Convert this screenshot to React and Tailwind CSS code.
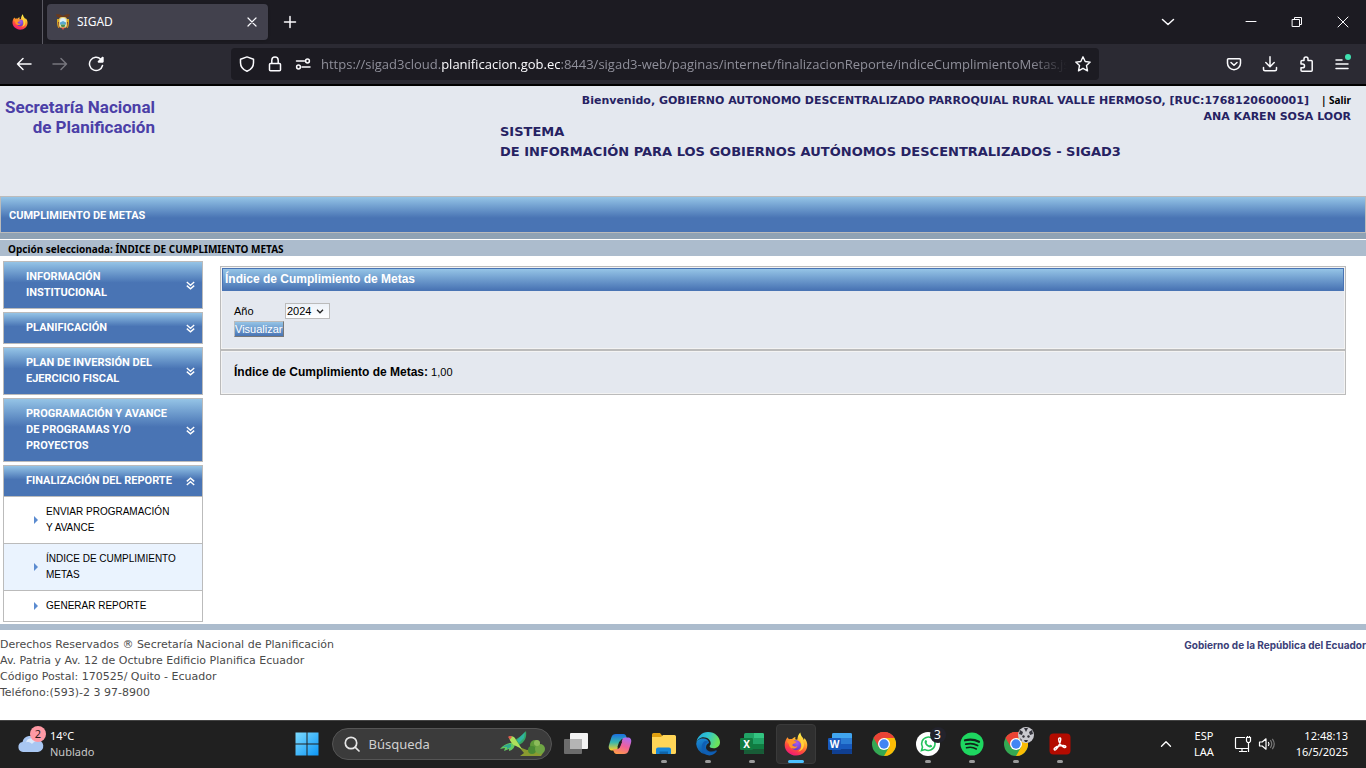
import React, { useState } from 'react';

const FirefoxIcon = ({ className }) => (
  <svg viewBox="0 0 24 24" className={className} aria-hidden="true">
    <defs>
      <linearGradient id="fxBody" x1="0.75" y1="0" x2="0.3" y2="1">
        <stop offset="0.1" stopColor="#fff04a" />
        <stop offset="0.4" stopColor="#ffa42a" />
        <stop offset="0.7" stopColor="#ff4a3d" />
        <stop offset="1" stopColor="#f0147d" />
      </linearGradient>
      <radialGradient id="fxGlobe" cx="0.6" cy="0.3" r="0.8">
        <stop offset="0" stopColor="#a35cf0" />
        <stop offset="1" stopColor="#5a35c0" />
      </radialGradient>
    </defs>
    <path
      fill="url(#fxBody)"
      d="M3.6 5.2c.5 1 .9 1.600 1.500 2.100.9-.4 2-.5 3-.2C9.200 5.900 10 5.400 11.500 5c-.4 1-.4 1.800 0 2.600.7.200 1.400.2 1.900 0 .2-3.400 1.300-5.600 3-7.100.1 2.400 1 3.600 2.200 5 .6.8 1 1.500 1.200 2.400.5-.5.6-1.200.6-2 2 2.200 2.900 4.600 2.900 7.100 0 5.900-4.800 10.500-11.100 10.500S.7 18.800.7 12.900c0-3 1.200-5.700 2.900-7.700z"
    />
    <circle cx="12" cy="13.200" r="5" fill="url(#fxGlobe)" />
    <path
      fill="#ff9328"
      d="M3 9.500c2-1.800 4.200-2.200 6-1.300 1.300.6 2.200 1.400 3.600 1.600-.3 1.200-2 1.600-3 1.900-.9.400-1.300 1-1.200 1.900 1.500 1.200 3.400 1.500 5.100.3-.8 1.800-2.500 2.900-4.400 2.700-2.700-.2-4.200-2.200-4.300-4.600C4.200 11.200 3.400 10.400 3 9.500z"
    />
    <path fill="#ffd33a" d="M16.500 4c.5 3 3.500 4.400 3.500 8.600 0 3.800-2.700 6.400-5.800 7 2.700-1.700 3.600-4.300 3.100-7.300-.4-2.600-1.800-4.600-.8-8.300z" />
  </svg>
);

const ShieldCrest = () => (
  <svg viewBox="0 0 16 16" className="h-4 w-4" aria-hidden="true">
    <path fill="#6b3a1c" d="M1 .5C3.500 0 6 .5 8 2c2-1.500 4.500-2 7-1.500-.3 2-2.300 3.500-4.500 3.500h-5C3.300 4 1.300 2.500 1 .5z" />
    <path fill="#d8a821" d="M2 5h3v9H3.500C2.500 13 2 10 2 8zM11 5h3v3c0 2-.5 5-1.500 6H11z" />
    <path fill="#8a3a2c" d="M3 8h2v6H4zM11 8h2l-1 6h-1z" />
    <rect x="4" y="3" width="8" height="11" rx="3" fill="#e7d27a" />
    <rect x="5" y="4" width="6" height="9" rx="2.800" fill="#dff0f8" />
    <path fill="#5aa7d0" d="M5 8.500l3-1.500 3 1.500v2H5z" />
    <path fill="#4e8f50" d="M5.500 10.500h5L9.500 13h-3z" />
    <path fill="#d95043" d="M6 13.500h4L8 16z" />
  </svg>
);

const Stroke = ({ className, children, width = 1.5 }) => (
  <svg
    viewBox="0 0 16 16"
    className={className}
    fill="none"
    stroke="currentColor"
    strokeWidth={width}
    strokeLinecap="round"
    strokeLinejoin="round"
    aria-hidden="true"
  >
    {children}
  </svg>
);

const TabStrip = () => (
  <div className="flex h-11 items-center bg-[#1c1b22] text-[#fbfbfe]">
    <div className="flex h-full w-[43px] items-center justify-center border-r border-[#5b5a63] pr-[2px]">
      <FirefoxIcon className="h-4 w-4" />
    </div>
    <div className="ml-1 flex h-9 w-[221px] items-center rounded bg-[#42414d] pr-2 pl-2 shadow-sm">
      <ShieldCrest />
      <span className="ml-[6px] flex-1 text-xs">SIGAD</span>
      <button type="button" aria-label="Cerrar" className="flex h-4 w-4 items-center justify-center">
        <Stroke className="h-4 w-4" width={1.200}><path d="M4 4l8 8M12 4l-8 8" /></Stroke>
      </button>
    </div>
    <button type="button" aria-label="Nueva" className="ml-[14px]">
      <Stroke className="h-4 w-4" width={1.500}><path d="M8 2.500v11M2.500 8h11" /></Stroke>
    </button>
    <div className="ml-auto flex items-center">
      <button type="button" aria-label="Lista" className="mr-[52px]">
        <Stroke className="h-4 w-4"><path d="M2.500 5.500L8 10.500l5.500-5" /></Stroke>
      </button>
      <button type="button" aria-label="Minimizar" className="flex w-[46px] justify-center">
        <Stroke className="h-4 w-4" width={1}><path d="M3 7.500h10" /></Stroke>
      </button>
      <button type="button" aria-label="Restaurar" className="flex w-[46px] justify-center">
        <Stroke className="h-4 w-4" width={1}><path d="M3.500 5.500h7v7h-7zM5.500 5.500v-2h7v7h-2" /></Stroke>
      </button>
      <button type="button" aria-label="Cerrar ventana" className="flex w-[46px] justify-center">
        <Stroke className="h-4 w-4" width={1}><path d="M3 3l10 10M13 3L3 13" /></Stroke>
      </button>
    </div>
  </div>
);

const NavBar = () => (
  <div className="flex h-[42px] items-center border-b-2 border-black bg-[#2b2a33] text-[#fbfbfe]">
    <div className="flex w-[231px] shrink-0 items-center gap-5 pl-4">
      <button type="button" aria-label="Atrás">
        <Stroke className="h-4 w-4"><path d="M1.500 8h13.500M7 2.500L1.500 8 7 13.500" /></Stroke>
      </button>
      <button type="button" aria-label="Adelante" className="text-[#77767e]">
        <Stroke className="h-4 w-4"><path d="M1 8h13.500M9 2.500L14.500 8 9 13.500" /></Stroke>
      </button>
      <button type="button" aria-label="Recargar">
        <Stroke className="h-4 w-4">
          <path d="M14.500 9.500A6.600 6.600 0 1 1 12.800 3.300M14.700 1.500v4.200h-4.200z" />
          <path fill="currentColor" d="M14.700 1.500v4.200h-4.200z" />
        </Stroke>
      </button>
    </div>
    <div className="flex h-8 w-[868px] items-center rounded bg-[#1c1b22] pr-2 pl-2">
      <Stroke className="h-4 w-4 shrink-0">
        <path d="M8 .9l6.500 2.300v3.600c0 4-2.600 7-6.500 8.500C4.100 13.800 1.500 10.800 1.500 6.800V3.200z" />
      </Stroke>
      <Stroke className="ml-3 h-4 w-4 shrink-0">
        <path d="M3.500 7.500h9a1 1 0 0 1 1 1v5.300a1 1 0 0 1-1 1h-9a1 1 0 0 1-1-1V8.500a1 1 0 0 1 1-1zM4.800 7.300V4.200a3.200 3.200 0 0 1 6.400 0v3.100" />
      </Stroke>
      <Stroke className="ml-3 h-4 w-4 shrink-0">
        <path d="M1.500 5h8M7 11h8" />
        <circle cx="12.500" cy="5" r="1.900" />
        <circle cx="3.500" cy="11" r="1.900" />
      </Stroke>
      <div className="ml-[10px] min-w-0 flex-1 overflow-hidden font-['Open_Sans',sans-serif] text-[13px] leading-5 whitespace-nowrap text-[#8f8f9a] [mask-image:linear-gradient(to_left,transparent,black_36px)]">
        https://sigad3cloud.<span className="text-[#fbfbfe]">planificacion.gob.ec</span>
        :8443/sigad3-web/paginas/internet/finalizacionReporte/indiceCumplimientoMetas.js
      </div>
      <button type="button" aria-label="Marcador" className="ml-2 shrink-0">
        <Stroke className="h-4 w-4" width={1.400}>
          <path d="M8 .8l2.200 4.700 5 .6-3.700 3.500 1 5.200L8 12.300l-4.500 2.500 1-5.200L.8 6.100l5-.6z" />
        </Stroke>
      </button>
    </div>
    <div className="ml-auto flex items-center gap-5 pr-4">
      <button type="button" aria-label="Pocket">
        <Stroke className="h-4 w-4">
          <path d="M2.500 2.800h11a1 1 0 0 1 1 1v3.400a6.500 6.500 0 0 1-13 0V3.800a1 1 0 0 1 1-1zM5 6.500l3 2.800 3-2.800" />
        </Stroke>
      </button>
      <button type="button" aria-label="Descargas">
        <Stroke className="h-4 w-4">
          <path d="M8 .8v9.700M3.800 6.500L8 10.700l4.200-4.200M1.500 11.500v1.800a1.500 1.500 0 0 0 1.500 1.500h10a1.500 1.500 0 0 0 1.500-1.500v-1.800" />
        </Stroke>
      </button>
      <button type="button" aria-label="Extensiones">
        <Stroke className="h-4 w-4">
          <path d="M6 4.500V3a2 2 0 0 1 4 0v1.500h3.200a1 1 0 0 1 1 1v8.700a1 1 0 0 1-1 1H4a1 1 0 0 1-1-1v-2.400h1.600a1.900 1.900 0 0 0 0-3.800H3V5.500a1 1 0 0 1 1-1z" />
        </Stroke>
      </button>
      <button type="button" aria-label="Menú" className="relative">
        <Stroke className="h-4 w-4"><path d="M2 4h6M2 8h12M2 12.500h12" /></Stroke>
        <span className="absolute -top-[2px] -right-[1px] h-[6px] w-[6px] rounded-full bg-[#3fe1b0]" />
      </button>
    </div>
  </div>
);

const menu = [
  'INFORMACIÓN INSTITUCIONAL',
  'PLANIFICACIÓN',
  'PLAN DE INVERSIÓN DEL EJERCICIO FISCAL',
  'PROGRAMACIÓN Y AVANCE DE PROGRAMAS Y/O PROYECTOS',
];

const options = ['ENVIAR PROGRAMACIÓN Y AVANCE', 'ÍNDICE DE CUMPLIMIENTO METAS', 'GENERAR REPORTE'];

const DoubleChevron = ({ up }) => (
  <svg viewBox="0 0 9 9" className={up ? 'h-[9px] w-[9px] rotate-180' : 'h-[9px] w-[9px]'} fill="none" stroke="#fff" strokeWidth="1.400" aria-hidden="true">
    <path d="M.8 1l3.700 3.200L8.200 1M.8 4.600l3.700 3.200 3.700-3.200" />
  </svg>
);

const MenuHeader = ({ label, open }) => (
  <button
    type="button"
    className="flex w-full items-center justify-between border border-[#bbb] bg-linear-to-b from-[#95c4e6] via-[#4974b4] via-45% to-[#4974b4] py-[7px] pr-[7px] pl-[22px] text-left font-['Roboto',sans-serif] text-[11px] leading-4 font-bold text-white"
  >
    <span className="w-[152px]">{label}</span>
    <DoubleChevron up={open} />
  </button>
);

const Sidebar = () => (
  <nav className="flex w-[200px] shrink-0 flex-col gap-[3px]">
    {menu.map((label) => (
      <MenuHeader key={label} label={label} />
    ))}
    <div>
      <MenuHeader label="FINALIZACIÓN DEL REPORTE" open />
      <ul className="border-x border-[#bbb] text-[10px] leading-4">
        {options.map((label, i) => (
          <li key={label} className={i === 1 ? 'border-b border-[#bbb] bg-[#eaf3fe]' : 'border-b border-[#bbb]'}>
            <a href="#" className="flex items-center py-[7px] pl-[30px] text-black">
              <svg viewBox="0 0 4 8" className="h-2 w-1 shrink-0" fill="#5b8bd0" aria-hidden="true">
                <path d="M0 0l4 4-4 4z" />
              </svg>
              <span className="ml-2 w-[130px]">{label}</span>
            </a>
          </li>
        ))}
      </ul>
    </div>
  </nav>
);

const ReportPanel = () => {
  const [year, setYear] = useState('2024');

  return (
    <section className="mt-[5px] mr-5 ml-[17px] flex-1 self-start border border-[#bbb] bg-[#e4e8ef] text-[11px] text-black">
      <div className="border border-[#f3f3f3] pb-[11px]">
        <h2 className="h-[23px] border border-[#4974b4] bg-linear-to-b from-[#95c4e6] to-[#4974b4] pl-[2px] text-xs leading-5 font-bold text-white">
          Índice de Cumplimiento de Metas
        </h2>
        <div className="px-3 pt-3">
          <div className="flex h-4 items-center">
            <label htmlFor="anio" className="w-[51px]">Año</label>
            <div className="relative">
              <select
                id="anio"
                value={year}
                onChange={(e) => setYear(e.target.value)}
                className="block h-4 w-[45px] appearance-none border border-[#bbb] bg-linear-to-b from-[#edf2f8] to-white pl-[1px] text-[11px] leading-[14px]"
              >
                <option>2024</option>
                <option>2023</option>
              </select>
              <svg viewBox="0 0 8 5" className="pointer-events-none absolute top-[6px] right-[6px] h-[5px] w-2" fill="none" stroke="#222" strokeWidth="1.300" aria-hidden="true">
                <path d="M1 .8l3 3 3-3" />
              </svg>
            </div>
          </div>
          <button
            type="button"
            className="mt-[2px] block h-4 border border-t-[#bbb] border-r-[#777] border-b-[#777] border-l-[#bbb] bg-linear-to-b from-[#95c4e6] to-[#4974b4] leading-[14px] text-white"
          >
            Visualizar
          </button>
        </div>
      </div>
      <div className="border-t-2 border-[#bbb]">
        <p className="border border-[#f3f3f3] px-3 pt-3 pb-[13px] leading-4">
          <b className="text-xs leading-4">Índice de Cumplimiento de Metas:</b> 1,00
        </p>
      </div>
    </section>
  );
};

const EdgeIcon = () => (
  <svg viewBox="0 0 24 24" className="h-6 w-6" aria-hidden="true">
    <defs>
      <linearGradient id="edgeTop" x1="0" y1="0" x2="1" y2="0.300">
        <stop offset="0" stopColor="#1ea7e0" />
        <stop offset="0.500" stopColor="#2fc3d0" />
        <stop offset="1" stopColor="#6be35a" />
      </linearGradient>
      <linearGradient id="edgeBase" x1="0" y1="0" x2="0.600" y2="1">
        <stop offset="0" stopColor="#1b8fdc" />
        <stop offset="1" stopColor="#0b4d9a" />
      </linearGradient>
    </defs>
    <path fill="url(#edgeBase)" d="M.2 12C.7 7.500 4.500 6 8 6.500c3 .4 5 2.300 5 4.500-1.200.3-3 2-3 4.500 0 3.200 4.500 5.500 9.500 3 .8-.4 1.600 0 1.200.7A12 12 0 0 1 .2 12z" />
    <path fill="#0f5fb5" d="M8.500 9.200c-2.200 1.600-3.300 4.500-2.600 7.500.8 3.600 3.700 6.300 7.600 6.900 3.500-.3 6-2.300 7.300-4.500-6.500 3.200-13-.2-11.800-5.600.4-1.800 1.600-2.800 3.400-3.500-.9-1-2.400-1.300-3.900-.8z" />
    <path fill="url(#edgeTop)" d="M.3 11C1 4.700 6 0 12 0c7 0 12 5 12 10.200 0 3.600-2.700 6-6.300 6-2.700 0-4.100-1-4.100-2 0-.6 1.100-1.200 1.100-3 0-2.900-3-5.900-7.200-5.900C3.900 5.300 1.200 7.800.3 11z" />
  </svg>
);

const OfficeIcon = ({ letter }) => {
  const excel = letter === 'X';
  return (
    <svg viewBox="0 0 24 24" className="h-6 w-6" aria-hidden="true">
      <rect x="4" y="1" width="20" height="21" rx="1.500" fill={excel ? '#21a366' : '#2b7cd3'} />
      <path fill={excel ? '#33c481' : '#41a5ee'} d={excel ? 'M14 1h8.500A1.500 1.500 0 0 1 24 2.500V6H14z' : 'M5.500 1h17A1.500 1.500 0 0 1 24 2.500V6H4V2.500A1.500 1.500 0 0 1 5.500 1z'} />
      <path fill={excel ? '#107c41' : '#185abd'} d="M4 12h20v5H4z" />
      <path fill={excel ? '#185c37' : '#103f91'} d="M4 17h20v3.500a1.500 1.500 0 0 1-1.500 1.500h-17A1.500 1.500 0 0 1 4 20.500z" />
      <rect x="0" y="6" width="13" height="12" rx="1.200" fill={excel ? '#107c41' : '#185abd'} />
      <text x="6.500" y="15.500" textAnchor="middle" fontSize="10" fontWeight="700" fill="#fff">{letter}</text>
    </svg>
  );
};

const ChromeIcon = () => (
  <svg viewBox="0 0 24 24" className="h-6 w-6" aria-hidden="true">
    <circle cx="12" cy="12" r="12" fill="#34a853" />
    <path fill="#ea4335" d="M12 12L1.600 6A12 12 0 0 1 22.400 6z" />
    <path fill="#ea4335" d="M1.600 6l5.200 9L12 6h10.400A12 12 0 0 0 1.600 6z" />
    <path fill="#fbbc05" d="M22.400 6A12 12 0 0 1 12 24l5.200-9L12 6z" />
    <circle cx="12" cy="12" r="6" fill="#fff" />
    <circle cx="12" cy="12" r="4.700" fill="#4285f4" />
  </svg>
);

const apps = [
  {
    name: 'Vista de tareas',
    icon: (
      <svg viewBox="0 0 24 24" className="h-6 w-6" aria-hidden="true">
        <rect x="6" y="1" width="18" height="16" rx="1" fill="#f3f3f3" />
        <rect x="0" y="7" width="18" height="15" rx="1" fill="#6c6c6c" />
        <path fill="#b4b4b4" d="M6 7h12v10H6z" />
      </svg>
    ),
  },
  {
    name: 'Copilot',
    icon: (
      <svg viewBox="0 0 24 24" className="h-6 w-6" aria-hidden="true">
        <defs>
          <linearGradient id="copLeft" x1="0.300" y1="0" x2="0.300" y2="1">
            <stop offset="0" stopColor="#1b6fe0" />
            <stop offset="0.500" stopColor="#35b6b0" />
            <stop offset="1" stopColor="#ffd023" />
          </linearGradient>
          <linearGradient id="copRight" x1="0.700" y1="0" x2="0.300" y2="1">
            <stop offset="0" stopColor="#b06cf0" />
            <stop offset="0.500" stopColor="#f0609a" />
            <stop offset="1" stopColor="#ff9a4a" />
          </linearGradient>
        </defs>
        <path fill="url(#copLeft)" d="M8 2h7.500c1.600 0 2.300 1 2.800 2.500l.7 2.300h-3.500c-2 0-2.800 1-3.300 2.500L9.800 16c-.6 1.800-1.500 2.500-3 2.500H4.500C1.500 18.500 0 16.500 1 13L3.500 5C4.200 3 5.500 2 8 2z" />
        <path fill="url(#copRight)" d="M16 22H8.500c-1.600 0-2.300-1-2.800-2.500L5 17.200h3.500c2 0 2.800-1 3.300-2.500L14.200 8c.6-1.800 1.500-2.500 3-2.500h2.300c3 0 4.500 2 3.500 5.500L20.500 19c-.7 2-2 3-4.500 3z" />
        <path fill="#202020" d="M11.200 9.500h3l-2.400 6h-2.500z" />
      </svg>
    ),
  },
  {
    name: 'Explorador',
    running: true,
    icon: (
      <svg viewBox="0 0 24 24" className="h-6 w-6" aria-hidden="true">
        <path fill="#e0a010" d="M0 2.500A1.500 1.500 0 0 1 1.500 1H8l2 2.500V8H0z" />
        <path fill="#ffd557" d="M0 5h9l2-2h11.500A1.500 1.500 0 0 1 24 4.500v16a1.500 1.500 0 0 1-1.500 1.500h-21A1.500 1.500 0 0 1 0 20.500z" />
        <path fill="#1786d8" d="M4 22v-4.500A2 2 0 0 1 6 15.500h11a2 2 0 0 1 2 2V22z" />
        <path fill="#0f63a8" d="M7.500 19.500H16V22H7.500z" />
      </svg>
    ),
  },
  { name: 'Edge', running: true, icon: <EdgeIcon /> },
  { name: 'Excel', running: true, icon: <OfficeIcon letter="X" /> },
  { name: 'Firefox', active: true, icon: <FirefoxIcon className="h-6 w-6" /> },
  { name: 'Word', icon: <OfficeIcon letter="W" /> },
  { name: 'Chrome', icon: <ChromeIcon /> },
  {
    name: 'WhatsApp',
    running: true,
    badge: '3',
    icon: (
      <svg viewBox="0 0 24 24" className="h-6 w-6" aria-hidden="true">
        <circle cx="12" cy="12" r="12" fill="#fff" />
        <path fill="none" stroke="#25c35e" strokeWidth="1.600" d="M5.500 18.500l1-3.400A6.700 6.700 0 1 1 9 17.600z" />
        <path fill="#25c35e" d="M9.300 8.200c.6-.5 1-.3 1.300.3l.5 1.200c.1.400-.3.800-.6 1.200.7 1.200 1.500 2 2.800 2.600.4-.4.700-1 1.200-.8l1.400.7c.5.300.3 1.100-.3 1.600-1 .8-2.400.6-4-.4-1.500-1-2.700-2.500-3-4-.1-1 .2-1.900.7-2.400z" />
      </svg>
    ),
  },
  {
    name: 'Spotify',
    running: true,
    icon: (
      <svg viewBox="0 0 24 24" className="h-6 w-6" aria-hidden="true">
        <circle cx="12" cy="12" r="11.500" fill="#1ed760" />
        <path fill="none" stroke="#10251a" strokeLinecap="round" strokeWidth="2.200" d="M5 8.300c5-1.300 9.800-.8 14 1.500" />
        <path fill="none" stroke="#10251a" strokeLinecap="round" strokeWidth="1.800" d="M5.800 12.200c4.200-1.200 8.300-.7 11.800 1.300" />
        <path fill="none" stroke="#10251a" strokeLinecap="round" strokeWidth="1.500" d="M6.500 15.800c3.600-.9 6.900-.5 9.800 1.200" />
      </svg>
    ),
  },
  { name: 'Chrome perfil', running: true, avatar: true, icon: <ChromeIcon /> },
  {
    name: 'Acrobat',
    running: true,
    icon: (
      <svg viewBox="0 0 24 24" className="h-6 w-6" aria-hidden="true">
        <rect x="1.500" y="1.500" width="21" height="21" rx="4" fill="#b30b00" />
        <path fill="none" stroke="#fff" strokeWidth="1.400" strokeLinejoin="round" d="M11.500 6c1-.6 1.500.4 1.100 2.300-.6 3-2.800 7.400-4.700 9.200-1 .9-2.200.3-1.600-.8.9-1.700 5-3 8.700-3.200 2-.1 3.200.6 2.800 1.500-.6 1.200-3 .2-4.700-1.700-1.500-1.700-2.600-4-2.500-5.900 0-.7.300-1.100.900-1.400z" />
      </svg>
    ),
  },
];

const TaskButton = ({ app }) => (
  <button
    type="button"
    aria-label={app.name}
    className="flex h-12 w-11 items-center justify-center"
  >
    <span
      className={
        app.active
          ? 'relative flex h-10 w-10 items-center justify-center rounded border border-[#3a3a3a] bg-[#2f2f2f]'
          : 'relative flex h-10 w-10 items-center justify-center'
      }
    >
      {app.icon}
      {app.badge && (
        <span className="absolute top-[3px] right-[2px] flex h-4 w-4 items-center justify-center rounded-full bg-[#23232c] text-xs text-white">
          {app.badge}
        </span>
      )}
      {app.avatar && (
        <svg viewBox="0 0 16 16" className="absolute top-[3px] right-[2px] h-4 w-4" aria-hidden="true">
          <circle cx="8" cy="8" r="8" fill="#c9c9cf" />
          <path fill="#34343c" d="M2 3l3 2-1 3-3-1zM14 3l-3 2 1 3 3-1zM6 1h4l-2 4zM5 8l2 1-1 2-2-1zM11 8L9 9l1 2 2-1zM6 13h4l-1 2H7zM2 11l2 2-1 1z" />
        </svg>
      )}
      {app.active && <span className="absolute bottom-0 h-[3px] w-4 rounded-full bg-[#4cc2ff]" />}
      {app.running && <span className="absolute bottom-[1px] h-[3px] w-[6px] rounded-full bg-[#9a9a9a]" />}
    </span>
  </button>
);

const SearchArt = () => (
  <svg viewBox="0 0 48 28" className="h-7 w-12" aria-hidden="true">
    <path fill="#8a9a30" d="M20 17l8 3 6-1 10 4-2 3H21l4-3z" />
    <circle cx="36" cy="15" r="5" fill="#5f9a3a" />
    <circle cx="33" cy="20" r="4" fill="#4a8a34" />
    <circle cx="41" cy="19" r="5" fill="#6fa544" />
    <circle cx="38" cy="13" r="3" fill="#8cbc5a" />
    <path fill="#35a564" d="M27 1c1 6-1 11-7 14l-4-5c4-3 8-5 11-9z" />
    <path fill="#2fb3a0" d="M18 10l8-8-1 6-5 5z" />
    <path fill="#62c860" d="M16 13C10 12 5 14 1 19l5-1-1 3 5-2v2c4-1 6-4 6-8z" />
    <path fill="#2fa890" d="M12 14c-3 0-6 1-8 3l4 0 0 2 4-2z" />
    <path fill="#aee05c" d="M10 7c3-2 6 0 7 3l6 9-6-3c-3-1-6-4-7-9z" />
    <path fill="#e05a50" d="M9 7c1-1.500 3-1.500 4 0L11 9.500z" />
  </svg>
);

const Taskbar = () => (
  <div className="grid h-12 grid-cols-[1fr_auto_1fr] items-center bg-[#202020] text-xs leading-4 text-white shadow-[inset_0_1px_#444]">
    <div className="flex items-center pl-[18px]">
      <div className="relative h-9 w-7">
        <svg viewBox="0 0 26 18" className="absolute bottom-[10px] left-0 h-[18px] w-[26px]" aria-hidden="true">
          <path fill="#a9c7f2" d="M5 18a5 5 0 0 1-.5-9.900A7.500 7.500 0 0 1 18.500 6 6 6 0 0 1 20 18z" />
          <path fill="#dce9fb" d="M9 6a6 6 0 0 1 9.500 1.200c-2 .3-3.500 1.300-4.500 2.800C12 8 9.500 7.500 8 8.500z" />
        </svg>
        <span className="absolute top-0 right-0 flex h-4 w-4 items-center justify-center rounded-full bg-[#ff99a4] text-[11px] text-[#2a1a1c]">2</span>
      </div>
      <div className="ml-1 text-[11px]">
        <div>14°C</div>
        <div className="text-[#c8c8c8]">Nublado</div>
      </div>
    </div>
    <div className="flex items-center">
      <button type="button" aria-label="Inicio" className="flex h-12 w-11 items-center justify-center">
        <svg viewBox="0 0 24 24" className="h-6 w-6" aria-hidden="true">
          <defs>
            <linearGradient id="winBlue" gradientUnits="userSpaceOnUse" x1="0" y1="0" x2="24" y2="24">
              <stop offset="0" stopColor="#7fdcff" />
              <stop offset="1" stopColor="#0a94f5" />
            </linearGradient>
          </defs>
          <path fill="url(#winBlue)" d="M.5.500h11v11H.5zM12.500.500h11v11h-11zM.5 12.500h11v11H.5zM12.500 12.500h11v11h-11z" />
        </svg>
      </button>
      <label className="mr-[2px] ml-[3px] flex h-8 w-[220px] items-center rounded-full border border-[#555] bg-[#3b3b3b] pr-1 pl-[11px]">
        <svg viewBox="0 0 16 16" className="h-4 w-4 shrink-0" fill="none" stroke="#e6e6e6" strokeWidth="1.700" strokeLinecap="round" aria-hidden="true">
          <circle cx="7" cy="7" r="5.700" />
          <path d="M11.300 11.300l3.700 3.700" />
        </svg>
        <input
          type="text"
          aria-label="Búsqueda"
          placeholder="Búsqueda"
          className="ml-[9px] min-w-0 flex-1 bg-transparent text-[13px] outline-none placeholder:text-[#d0d0d0]"
        />
        <SearchArt />
      </label>
      {apps.map((app) => (
        <TaskButton key={app.name} app={app} />
      ))}
    </div>
    <div className="flex items-center justify-end pr-[18px]">
      <Stroke className="h-3 w-3" width={1.800}><path d="M2 11l6-6 6 6" /></Stroke>
      <div className="ml-[18px] w-7 text-center text-[11px]">
        <div>ESP</div>
        <div>LAA</div>
      </div>
      <svg viewBox="0 0 18 18" className="ml-4 h-[18px] w-[18px]" fill="none" stroke="#fff" strokeWidth="1.200" aria-hidden="true">
        <path d="M11 2.500H2.500A1 1 0 0 0 1.500 3.500v9a1 1 0 0 0 1 1H14M5 16.500h8M8 13.500v3M14.500 8v9M12.500 2.500h4V6l-1 1.500h-2l-1-1.500zM13.500 1v1.500M15.500 1v1.500" />
      </svg>
      <svg viewBox="0 0 18 18" className="ml-[6px] h-[18px] w-[18px]" fill="none" stroke="#fff" strokeWidth="1.200" strokeLinejoin="round" aria-hidden="true">
        <path d="M1.500 7v4h2.700L8 14.200V3.800L4.200 7z" />
        <path d="M10.300 7c.9 1.200.9 2.800 0 4" />
        <path stroke="#777" d="M12.300 5.200c1.800 2.400 1.800 5.200 0 7.600M14.300 3.800c2.400 3.200 2.400 7.200 0 10.400" />
      </svg>
      <div className="ml-3 w-[60px] text-right text-[11px]">
        <div>12:48:13</div>
        <div>16/5/2025</div>
      </div>
    </div>
  </div>
);

const App = () => (
  <div className="flex min-h-screen flex-col bg-white font-['Noto_Sans','Open_Sans',sans-serif]">
    <TabStrip />
    <NavBar />

    <header className="flex h-[110px] bg-[#e4e8ef] font-['DejaVu_Sans',sans-serif] text-[11px] leading-4 font-bold text-[#262262]">
      <div className="w-[500px] shrink-0 pt-[11px]">
        <div className="w-[155px] text-right font-['Roboto',sans-serif] text-[17px] leading-5 whitespace-nowrap text-[#4b3fa7]">
          Secretaría Nacional
          <br />
          de Planificación
        </div>
      </div>
      <div className="flex-1 pt-[6px]">
        <div className="pr-[15px] text-right whitespace-nowrap">
          Bienvenido, GOBIERNO AUTONOMO DESCENTRALIZADO PARROQUIAL RURAL VALLE HERMOSO, [RUC:1768120600001]
          <a href="#" className="ml-3 font-['Noto_Sans',sans-serif] text-[10px] text-black">| Salir</a>
          <div>ANA KAREN SOSA LOOR</div>
        </div>
        <h1 className="-mt-[3px] text-[13px] leading-5">
          SISTEMA
          <br />
          DE INFORMACIÓN PARA LOS GOBIERNOS AUTÓNOMOS DESCENTRALIZADOS - SIGAD3
        </h1>
      </div>
    </header>

    <div className="h-[37px] border border-[#bbb] bg-linear-to-b from-[#95c4e6] via-[#4974b4] via-60% to-[#4974b4] pl-2 font-['Roboto',sans-serif] text-[11px] leading-[37px] font-bold text-white">
      CUMPLIMIENTO DE METAS
    </div>
    <div className="h-[7px] border-b border-white bg-[#8fa2b4]" />
    <div className="h-4 bg-[#acbccd] pl-2 text-[10px] leading-[18px] font-bold text-black">
      Opción seleccionada: ÍNDICE DE CUMPLIMIENTO METAS
    </div>

    <main className="flex pt-[5px] pl-[3px] font-['Liberation_Sans',sans-serif]">
      <Sidebar />
      <ReportPanel />
    </main>

    <footer className="mt-[2px] flex items-start justify-between border-t-[6px] border-[#acbccd] pt-[7px] font-['DejaVu_Sans',sans-serif] text-[11px] leading-4 text-[#4a4a4a]">
      <address className="not-italic">
        Derechos Reservados ® Secretaría Nacional de Planificación
        <br />
        Av. Patria y Av. 12 de Octubre Edificio Planifica Ecuador
        <br />
        Código Postal: 170525/ Quito - Ecuador
        <br />
        Teléfono:(593)-2 3 97-8900
      </address>
      <span className="font-['Inter',sans-serif] text-[10px] font-bold text-[#3b4078]">Gobierno de la República del Ecuador</span>
    </footer>

    <div className="mt-auto">
      <Taskbar />
    </div>
  </div>
);

export default App;
